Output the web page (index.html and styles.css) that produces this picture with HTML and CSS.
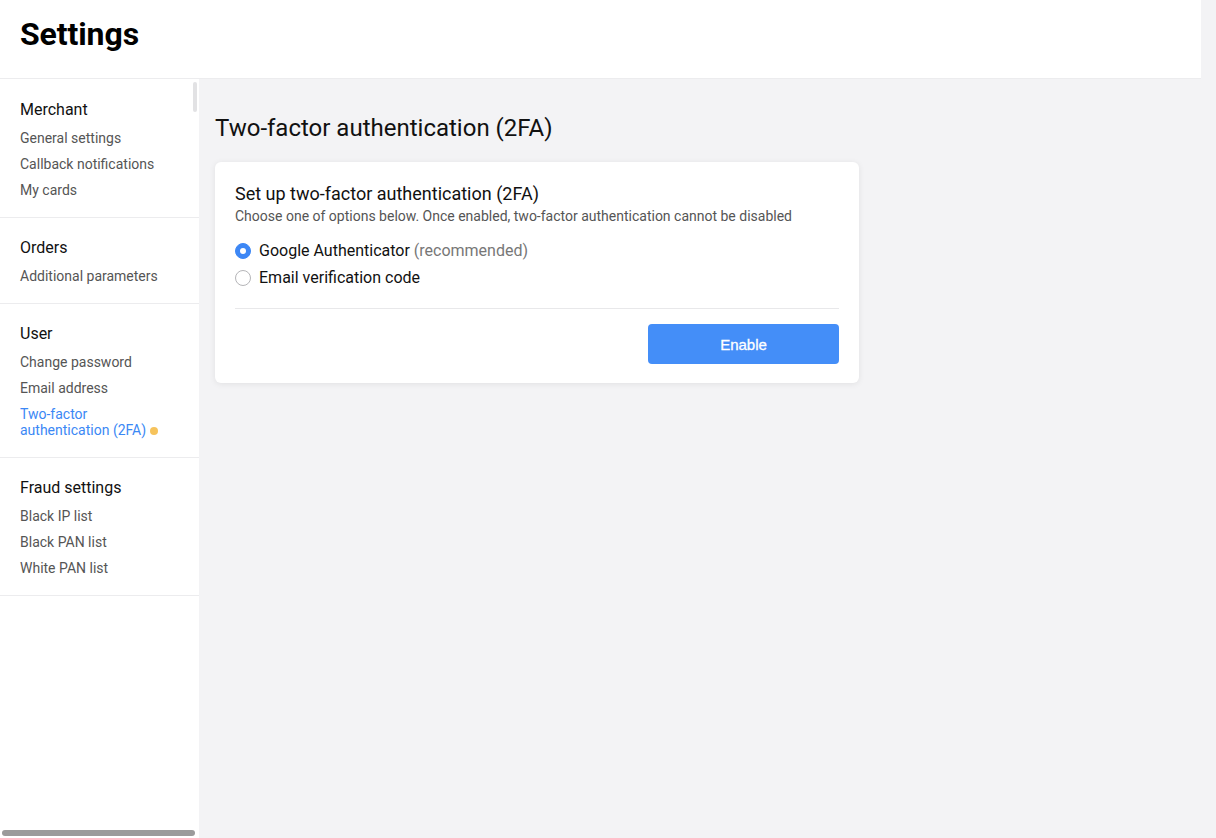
FILE: index.html
```html
<!DOCTYPE html>
<html lang="en">
<head>
<meta charset="utf-8">
<title>Settings</title>
<link rel="stylesheet" href="styles.css">
</head>
<body>
<div class="app">
  <header class="topbar">
    <h1 class="page-title">Settings</h1>
  </header>
  <div class="body">
    <aside class="sidebar">
      <section class="nav-group">
        <div class="nav-heading">Merchant</div>
        <a class="nav-item">General settings</a>
        <a class="nav-item">Callback notifications</a>
        <a class="nav-item">My cards</a>
      </section>
      <section class="nav-group">
        <div class="nav-heading">Orders</div>
        <a class="nav-item">Additional parameters</a>
      </section>
      <section class="nav-group">
        <div class="nav-heading">User</div>
        <a class="nav-item">Change password</a>
        <a class="nav-item">Email address</a>
        <a class="nav-item active">Two-factor authentication (2FA)<span class="dot"></span></a>
      </section>
      <section class="nav-group">
        <div class="nav-heading">Fraud settings</div>
        <a class="nav-item">Black IP list</a>
        <a class="nav-item">Black PAN list</a>
        <a class="nav-item">White PAN list</a>
      </section>
      <div class="vscroll"></div>
      <div class="hscroll"></div>
    </aside>
    <main class="content">
      <h2 class="content-title">Two-factor authentication (2FA)</h2>
      <div class="card">
        <div class="card-title">Set up two-factor authentication (2FA)</div>
        <div class="card-sub">Choose one of options below. Once enabled, two-factor authentication cannot be disabled</div>
        <div class="options">
          <label class="option"><span class="radio checked"></span><span>Google Authenticator <span class="muted">(recommended)</span></span></label>
          <label class="option"><span class="radio"></span><span>Email verification code</span></label>
        </div>
        <div class="card-footer">
          <button class="btn-primary">Enable</button>
        </div>
      </div>
    </main>
  </div>
</div>
</body>
</html>
```

FILE: styles.css
```css
* { box-sizing: border-box; }
html, body { margin: 0; padding: 0; height: 100%; }
body {
  font-family: Roboto, "Liberation Sans", Arial, sans-serif;
  background: #f3f3f5;
  color: #111;
}
.app { display: flex; flex-direction: column; height: 838px; overflow: hidden; }
.topbar {
  width: 1201px;
  height: 79px;
  background: #fff;
  border-bottom: 1px solid #ececee;
  display: flex;
  align-items: center;
  padding: 0 20px 10px;
}
.page-title { margin: 0; font-size: 32px; font-weight: 700; color: #000; letter-spacing: -0.1px; }
.body { display: flex; flex: 1; }
.sidebar {
  position: relative;
  width: 199px;
  background: #fff;
  flex: none;
}
.nav-group {
  padding: 18px 20px 14px;
  border-bottom: 1px solid #ececee;
  display: flex;
  flex-direction: column;
}
.nav-group:first-child { padding-top: 19px; }
.nav-heading { font-size: 16px; line-height: 24px; margin-bottom: 3px; color: #111; }
.nav-item { font-size: 14px; line-height: 16px; padding: 5px 0; color: #555; cursor: pointer; }
.nav-item.active { color: #3b88f5; padding-right: 18px; }
.dot {
  display: inline-block;
  width: 8px; height: 8px;
  border-radius: 50%;
  background: #f6c35c;
  margin-left: 4px;
  vertical-align: 0px;
}
.vscroll {
  position: absolute;
  left: 193px; top: 3px;
  width: 4px; height: 30px;
  border-radius: 2px;
  background: #e2e2e4;
}
.hscroll {
  position: absolute;
  left: 2px; bottom: 2px;
  width: 193px; height: 6px;
  border-radius: 3px;
  background: #9b9b9b;
}
.content { flex: 1; padding: 34px 16px 0 16px; }
.content-title { margin: 0 0 19px; font-size: 24px; font-weight: 400; line-height: 30px; color: #111; }
.card {
  width: 644px;
  background: #fff;
  border-radius: 6px;
  box-shadow: 0 1px 6px rgba(0,0,0,0.08);
  padding: 20px 20px 19px;
}
.card-title { font-size: 18px; line-height: 23px; color: #111; }
.card-sub { font-size: 14px; line-height: 22px; color: #555; }
.options { display: flex; flex-direction: column; margin-top: 10px; padding-bottom: 17px; border-bottom: 1px solid #e8e8ea; }
.option { display: flex; align-items: center; gap: 8px; font-size: 16px; line-height: 27px; color: #111; }
.muted { color: #777; }
.radio {
  width: 16px; height: 16px;
  border-radius: 50%;
  border: 1px solid #b5b5b8;
  background: #fff;
  flex: none;
  position: relative;
}
.radio.checked { background: #3d87f5; border-color: #3d87f5; }
.radio.checked::after {
  content: "";
  position: absolute;
  left: 4px; top: 4px;
  width: 6px; height: 6px;
  border-radius: 50%;
  background: #fff;
}
.card-footer { display: flex; justify-content: flex-end; padding-top: 15px; }
.btn-primary {
  width: 191px; height: 40px;
  border: none;
  border-radius: 4px;
  background: #448ef8;
  color: #fff;
  font-family: "Liberation Sans", Arial, sans-serif;
  font-size: 15px;
  font-weight: 400;
  -webkit-text-stroke: 0.3px #fff;
}
```
